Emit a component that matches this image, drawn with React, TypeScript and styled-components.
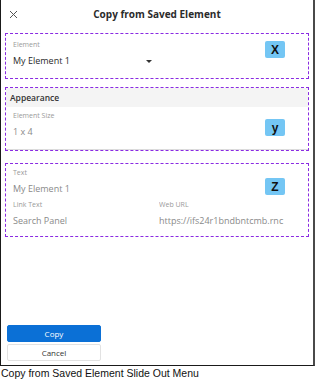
import styled, { createGlobalStyle } from "styled-components";

const GlobalStyle = createGlobalStyle`
  html, body {
    margin: 0;
    padding: 0;
    background: #ffffff;
  }
  * {
    box-sizing: border-box;
  }
`;

const Page = styled.div`
  width: 315px;
  height: 379px;
  display: flex;
  flex-direction: column;
  font-family: "Open Sans", "Noto Sans", sans-serif;
`;

const Frame = styled.div`
  width: 315px;
  height: 366px;
  display: flex;
  flex-direction: column;
  border-left: 1px solid #1a1a1a;
  border-right: 2px solid #4a4a4a;
  border-bottom: 1px solid #1a1a1a;
  background: #ffffff;
`;

const Header = styled.div`
  height: 33px;
  display: flex;
  align-items: center;
  position: relative;
  padding-bottom: 5px;
`;

const CloseBtn = styled.button`
  position: absolute;
  left: 6px;
  top: 8px;
  width: 12px;
  height: 12px;
  padding: 0;
  border: none;
  background: transparent;
  display: flex;
  align-items: center;
  justify-content: center;
`;

const Title = styled.h1`
  flex: 1;
  margin: 0;
  text-align: center;
  font-size: 10px;
  font-weight: 700;
  color: #2b2b2b;
`;

const Section = styled.div<{ $gap?: number }>`
  margin: 0 4px ${(p) => p.$gap ?? 8}px 4px;
  border: 1px dashed #8a2be2;
  position: relative;
`;

const GroupBar = styled.div`
  height: 19px;
  display: flex;
  align-items: center;
  padding-left: 4px;
  background: #f4f4f4;
  font-size: 8.5px;
  font-weight: 600;
  color: #333333;
`;

const Body = styled.div<{ $pt: number; $pb: number; $divider?: boolean }>`
  padding: ${(p) => p.$pt}px 0 ${(p) => p.$pb}px 7px;
  border-bottom: ${(p) => (p.$divider ? "1px solid #dcdcdc" : "none")};
`;

const Row = styled.div`
  display: grid;
  grid-template-columns: 146px 1fr;
`;

const Field = styled.div<{ $clip?: number }>`
  display: flex;
  flex-direction: column;
  min-width: 0;
  overflow: hidden;
  padding-right: ${(p) => p.$clip ?? 0}px;
`;

const Label = styled.div`
  font-size: 7px;
  color: #9a9a9a;
  height: 12px;
  line-height: 12px;
`;

const Value = styled.div<{ $muted?: boolean }>`
  font-size: 9px;
  color: ${(p) => (p.$muted ? "#8a8a8a" : "#2b2b2b")};
  height: 20px;
  line-height: 20px;
  white-space: nowrap;
  overflow: hidden;
`;

const Select = styled.div`
  width: 139px;
  display: flex;
  align-items: center;
  justify-content: space-between;
`;

const Caret = styled.span`
  width: 0;
  height: 0;
  border-left: 3px solid transparent;
  border-right: 3px solid transparent;
  border-top: 3px solid #333333;
`;

const Badge = styled.div<{ $top: number }>`
  position: absolute;
  right: 23px;
  top: ${(p) => p.$top}px;
  width: 20px;
  height: 17px;
  border-radius: 2px;
  background: #74c6f4;
  display: flex;
  align-items: center;
  justify-content: center;
  font-family: "Liberation Sans", Arial, sans-serif;
  font-weight: 700;
  font-size: 12px;
  color: #111111;
`;

const Footer = styled.div`
  margin-top: auto;
  padding: 0 0 4px 6px;
  display: flex;
  flex-direction: column;
  gap: 2px;
`;

const Button = styled.button<{ $primary?: boolean }>`
  width: 94px;
  height: 17px;
  border-radius: 2px;
  font-family: "Open Sans", "Noto Sans", sans-serif;
  font-size: 8px;
  padding: 0;
  cursor: pointer;
  border: 1px solid ${(p) => (p.$primary ? "#0b70d6" : "#e2e2e2")};
  background: ${(p) => (p.$primary ? "#0b70d6" : "#ffffff")};
  color: ${(p) => (p.$primary ? "#ffffff" : "#333333")};
`;

const Caption = styled.div`
  padding: 1px 0 0 1px;
  font-family: "Liberation Sans", Arial, sans-serif;
  font-size: 10.5px;
  color: #111111;
`;

export default function App() {
  return (
    <>
      <GlobalStyle />
      <Page>
        <Frame>
          <Header>
            <CloseBtn aria-label="Close">
              <svg width="9" height="9" viewBox="0 0 9 9">
                <path d="M1 1L8 8M8 1L1 8" stroke="#555" strokeWidth="1" />
              </svg>
            </CloseBtn>
            <Title>Copy from Saved Element</Title>
          </Header>

          <Section>
            <Body $pt={5} $pb={7}>
              <Label>Element</Label>
              <Select>
                <Value>My Element 1</Value>
                <Caret />
              </Select>
            </Body>
            <Badge $top={7}>X</Badge>
          </Section>

          <Section $gap={12}>
            <GroupBar>Appearance</GroupBar>
            <Body $pt={3} $pb={7} $divider>
              <Label>Element Size</Label>
              <Value $muted>1 x 4</Value>
            </Body>
            <Badge $top={31}>y</Badge>
          </Section>

          <Section>
            <Body $pt={3} $pb={5}>
              <Label>Text</Label>
              <Value $muted>My Element 1</Value>
              <Row>
                <Field>
                  <Label>Link Text</Label>
                  <Value $muted>Search Panel</Value>
                </Field>
                <Field $clip={23}>
                  <Label>Web URL</Label>
                  <Value $muted>https://ifs24r1bndbntcmb.rnc</Value>
                </Field>
              </Row>
            </Body>
            <Badge $top={14}>Z</Badge>
          </Section>

          <Footer>
            <Button $primary>Copy</Button>
            <Button>Cancel</Button>
          </Footer>
        </Frame>
        <Caption>Copy from Saved Element Slide Out Menu</Caption>
      </Page>
    </>
  );
}
